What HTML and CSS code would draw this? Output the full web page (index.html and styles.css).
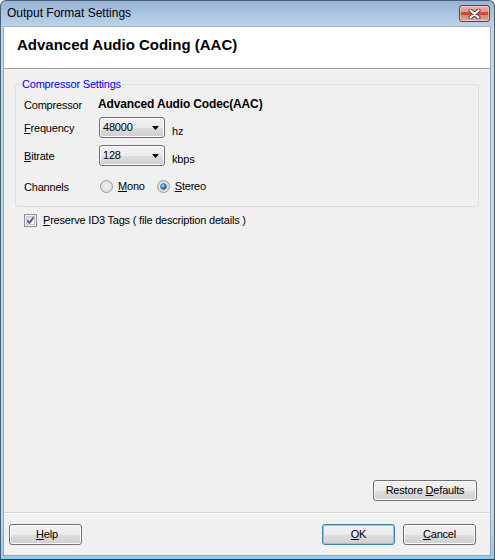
FILE: index.html
```html
<!DOCTYPE html>
<html>
<head>
<meta charset="utf-8">
<link rel="stylesheet" href="styles.css">
</head>
<body>
<div class="window">
  <div class="titlebar">
    <span class="title">Output Format Settings</span>
    <div class="close">
      <svg width="13" height="10" viewBox="0 0 13 10"><path d="M2.5 1.5 L10.5 8.5 M10.5 1.5 L2.5 8.5" stroke="#4b3b3b" stroke-width="4" stroke-linecap="round" fill="none"/><path d="M2.5 1.5 L10.5 8.5 M10.5 1.5 L2.5 8.5" stroke="#ffffff" stroke-width="2.2" stroke-linecap="round" fill="none"/></svg>
    </div>
  </div>
  <div class="client">
    <div class="header">Advanced Audio Coding (AAC)</div>
    <fieldset class="group">
      <legend>Compressor Settings</legend>
      <div class="grid">
        <div class="row row-a">
          <span class="label">Compressor</span>
          <span class="codec">Advanced Audio Codec(AAC)</span>
        </div>
        <div class="row row-b">
          <span class="label"><u>F</u>requency</span>
          <div class="combo"><span>48000</span><svg class="arrow" width="7" height="4" viewBox="0 0 7 4"><path d="M0 0 H7 L3.5 4 Z" fill="#000"/></svg></div>
          <span class="unit">hz</span>
        </div>
        <div class="row row-c">
          <span class="label"><u>B</u>itrate</span>
          <div class="combo"><span>128</span><svg class="arrow" width="7" height="4" viewBox="0 0 7 4"><path d="M0 0 H7 L3.5 4 Z" fill="#000"/></svg></div>
          <span class="unit">kbps</span>
        </div>
        <div class="row row-d">
          <span class="label">Channels</span>
          <span class="radio radio-mono"><svg width="13" height="13" viewBox="0 0 13 13"><defs><radialGradient id="rg1" cx="0.5" cy="0.5" r="0.6"><stop offset="0" stop-color="#f6f6f6"/><stop offset="1" stop-color="#d2d2d2"/></radialGradient></defs><circle cx="6.5" cy="6.5" r="6" fill="url(#rg1)" stroke="#9c9c9c"/><circle cx="6.5" cy="6.5" r="4.5" fill="none" stroke="#e6e6e6" stroke-width="1"/></svg></span>
          <span class="radio-text"><u>M</u>ono</span>
          <span class="radio radio-stereo"><svg width="13" height="13" viewBox="0 0 13 13"><defs><radialGradient id="rg2" cx="0.5" cy="0.5" r="0.6"><stop offset="0" stop-color="#f6f6f6"/><stop offset="1" stop-color="#d2d2d2"/></radialGradient><radialGradient id="dot" cx="0.4" cy="0.35" r="0.7"><stop offset="0" stop-color="#b8e4fb"/><stop offset="0.5" stop-color="#3a8ad0"/><stop offset="1" stop-color="#1c4f8c"/></radialGradient></defs><circle cx="6.5" cy="6.5" r="6" fill="url(#rg2)" stroke="#9c9c9c"/><circle cx="6.5" cy="6.5" r="3" fill="url(#dot)" stroke="#2a5a95" stroke-width="0.6"/></svg></span>
          <span class="radio-text"><u>S</u>tereo</span>
        </div>
      </div>
    </fieldset>
    <div class="check-row">
      <svg class="checkbox" width="13" height="13" viewBox="0 0 13 13"><defs><linearGradient id="cb" x1="0" y1="0" x2="1" y2="1"><stop offset="0" stop-color="#d8d8d8"/><stop offset="1" stop-color="#fbfbfb"/></linearGradient></defs><rect x="0.5" y="0.5" width="12" height="12" fill="#f4f4f4" stroke="#8e8f8f"/><rect x="2.5" y="2.5" width="8" height="8" fill="url(#cb)" stroke="#c7c7c7"/><path d="M3.3 6.4 L5.4 8.8 L9.7 3.2" stroke="#4a5a94" stroke-width="1.8" fill="none"/></svg>
      <span class="check-text"><u>P</u>reserve ID3 Tags ( file description details )</span>
    </div>
    <div class="spacer"></div>
    <div class="restore-row">
      <button class="btn btn-restore"><span>Restore <u>D</u>efaults</span></button>
    </div>
    <div class="separator"></div>
    <div class="footer">
      <button class="btn"><span>&nbsp;<u>H</u>elp</span></button>
      <div class="spacer-h"></div>
      <button class="btn btn-default"><span><u>O</u>K</span></button>
      <button class="btn btn-cancel"><span><u>C</u>ancel</span></button>
    </div>
  </div>
</div>
</body>
</html>
```

FILE: styles.css
```css
* { box-sizing: border-box; }
html, body { margin: 0; padding: 0; background: #ffffff; }
body {
  font-family: "Liberation Sans", Arial, sans-serif;
  font-size: 11px;
  line-height: 13px;
  letter-spacing: -0.2px;
  color: #000;
}
u { text-decoration: underline; text-underline-offset: 1px; }

.window {
  width: 495px;
  height: 560px;
  border: 1px solid #4b5e76;
  border-bottom-color: #2c3a4a;
  border-radius: 6px 6px 0 0;
  padding: 0 3px 3px 2px;
  display: flex;
  flex-direction: column;
  overflow: hidden;
  background: linear-gradient(to bottom, #98b5d6 0, #bcd2ea 25px, #c3d7ed 26px, #c3d7ed 92%, #8fcbef 100%);
}

.titlebar {
  height: 25px;
  flex: none;
  display: flex;
  align-items: flex-start;
  justify-content: space-between;
}
.title {
  font-size: 12px;
  line-height: 14px;
  letter-spacing: 0;
  margin: 5px 0 0 4px;
}
.close {
  width: 31px;
  height: 17px;
  margin: 4px 1px 0 0;
  border: 1px solid #6b3a34;
  border-radius: 3px;
  background: linear-gradient(to bottom, #eab1a4 0%, #dd9484 42%, #c8573a 43%, #c24a2c 58%, #d68672 59%, #e3a595 100%);
  box-shadow: inset 0 0 0 1px rgba(255, 230, 220, 0.55);
  display: flex;
  align-items: center;
  justify-content: center;
}

.client {
  flex: 1;
  display: flex;
  flex-direction: column;
  background: #f0f0f0;
  border: 1px solid #8ea6c2;
  border-top-color: #9db4cf;
}

.header {
  flex: none;
  height: 42px;
  background: #ffffff;
  border-bottom: 1px solid #a0a0a0;
  padding: 9px 0 0 13px;
  font-size: 15px;
  line-height: 17px;
  letter-spacing: 0;
  font-weight: bold;
}

.group {
  margin: 9px 11px 0;
  padding: 6px 8px 12px 5px;
  border: 1px solid #d5dfe5;
  border-radius: 3px;
  min-width: 0;
}
.group legend {
  padding: 0 1px;
  color: #0000ff;
  font-size: 11px;
  line-height: 13px;
}
.grid {
  margin-left: 3px;
  display: flex;
  flex-direction: column;
}
.row {
  display: flex;
  align-items: center;
}
.row-a { height: 15px; }
.row-b { height: 21px; margin-top: 5px; }
.row-c { height: 21px; margin-top: 7px; }
.row-d { height: 15px; margin-top: 13px; }
.label {
  width: 75px;
  flex: none;
  padding-top: 1px;
}
.codec {
  font-weight: bold;
  font-size: 12px;
  letter-spacing: -0.15px;
  margin-left: -1px;
}
.combo {
  width: 66px;
  height: 21px;
  border: 1px solid #707070;
  border-radius: 3px;
  background: linear-gradient(to bottom, #f2f2f2 0%, #ebebeb 50%, #dddddd 51%, #cfcfcf 100%);
  box-shadow: inset 0 0 0 1px #fbfbfb;
  display: flex;
  align-items: center;
  justify-content: space-between;
  padding: 0 5px 0 3px;
}
.unit {
  align-self: flex-start;
  margin: 8px 0 0 7px;
}
.radio { display: flex; }
.radio-mono { margin-left: 1px; }
.radio-stereo { margin-left: 12px; }
.radio-text { margin-left: 5px; }

.check-row {
  display: flex;
  align-items: center;
  height: 13px;
  margin: 7px 0 0 20px;
}
.checkbox { flex: none; }
.check-text { margin-left: 6px; }

.spacer { flex: 1; }

.btn {
  font-family: "Liberation Sans", Arial, sans-serif;
  font-size: 11px;
  line-height: 13px;
  letter-spacing: -0.2px;
  color: #000;
  width: 73px;
  height: 21px;
  padding: 0;
  border: 1px solid #707070;
  border-radius: 3px;
  background: linear-gradient(to bottom, #f2f2f2 0%, #ebebeb 50%, #dddddd 51%, #cfcfcf 100%);
  box-shadow: inset 0 0 0 1px #fcfcfc;
  display: flex;
  align-items: center;
  justify-content: center;
}
.restore-row {
  display: flex;
  justify-content: flex-end;
  padding-right: 13px;
}
.btn-restore { width: 104px; }
.separator {
  height: 1px;
  margin-top: 11px;
  background: #d5d5d5;
  box-shadow: 0 1px 0 #ffffff;
}
.footer {
  display: flex;
  margin-top: 11px;
  padding: 0 14px 10px 5px;
}
.spacer-h { flex: 1; }
.btn-default {
  border-color: #3c7fb1;
  box-shadow: inset 0 0 0 1px #6fd2f6;
}
.btn-cancel { margin-left: 8px; }
```
